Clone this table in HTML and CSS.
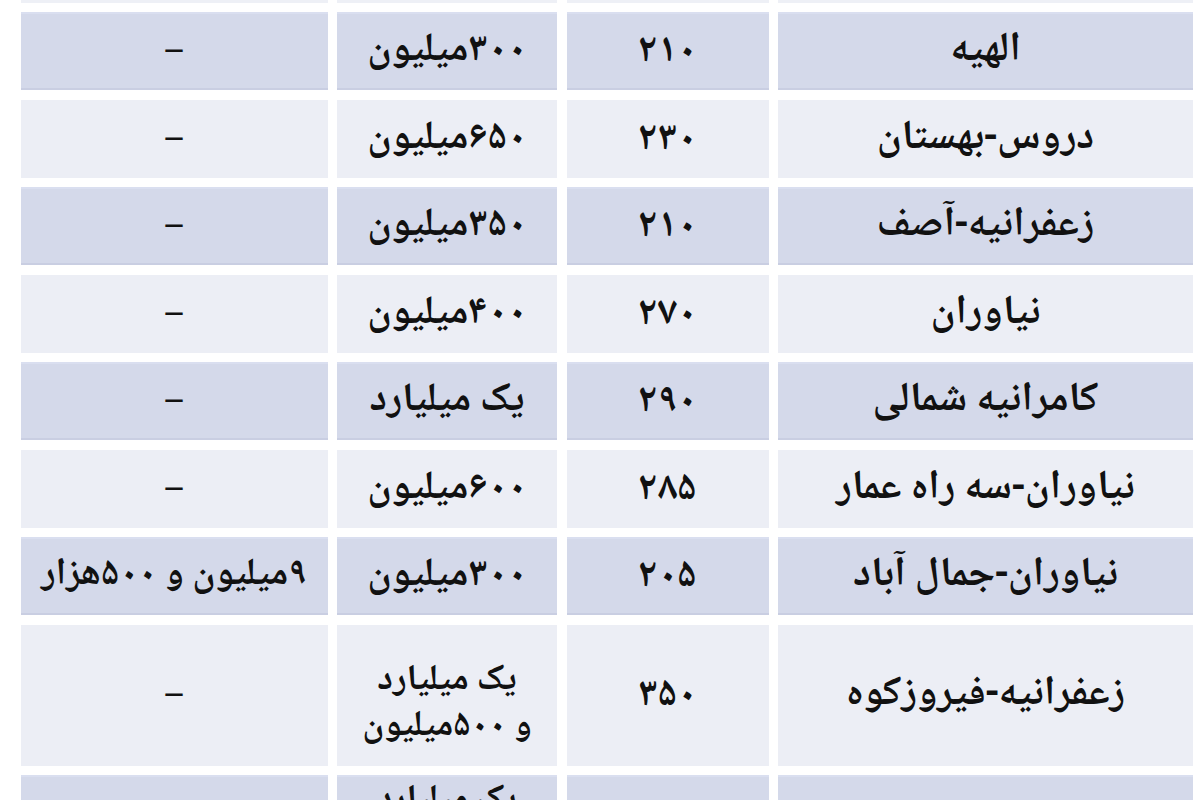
FILE: index.html
```html
<!DOCTYPE html>
<html lang="fa" dir="rtl">
<head>
<meta charset="utf-8">
<title>قیمت</title>
<link rel="stylesheet" href="styles.css">
</head>
<body>
<div class="table">
  <div class="row light cap"><div class="cell"></div><div class="cell"></div><div class="cell"></div><div class="cell"></div></div>
  <div class="row blue"><div class="cell name">الهیه</div><div class="cell num">۲۱۰</div><div class="cell price">۳۰۰میلیون</div><div class="cell dash">–</div></div>
  <div class="row light"><div class="cell name">دروس-بهستان</div><div class="cell num">۲۳۰</div><div class="cell price">۶۵۰میلیون</div><div class="cell dash">–</div></div>
  <div class="row blue"><div class="cell name">زعفرانیه-آصف</div><div class="cell num">۲۱۰</div><div class="cell price">۳۵۰میلیون</div><div class="cell dash">–</div></div>
  <div class="row light"><div class="cell name">نیاوران</div><div class="cell num">۲۷۰</div><div class="cell price">۴۰۰میلیون</div><div class="cell dash">–</div></div>
  <div class="row blue"><div class="cell name">کامرانیه شمالی</div><div class="cell num">۲۹۰</div><div class="cell price">یک میلیارد</div><div class="cell dash">–</div></div>
  <div class="row light"><div class="cell name">نیاوران-سه راه عمار</div><div class="cell num">۲۸۵</div><div class="cell price">۶۰۰میلیون</div><div class="cell dash">–</div></div>
  <div class="row blue"><div class="cell name">نیاوران-جمال آباد</div><div class="cell num">۲۰۵</div><div class="cell price">۳۰۰میلیون</div><div class="cell wide">۹میلیون و ۵۰۰هزار</div></div>
  <div class="row light"><div class="cell name">زعفرانیه-فیروزکوه</div><div class="cell num">۳۵۰</div><div class="cell multi">یک میلیارد<br>و ۵۰۰میلیون</div><div class="cell dash">–</div></div>
  <div class="row blue last"><div class="cell"></div><div class="cell"></div><div class="cell multi">یک میلیارد</div><div class="cell dash"></div></div>
</div>
</body>
</html>
```
FILE: styles.css
```css
html, body {
  margin: 0;
  padding: 0;
  background: #ffffff;
  overflow: hidden;
}

body {
  width: 1200px;
  height: 800px;
  font-family: "Noto Naskh Arabic", "DejaVu Sans", sans-serif;
  font-weight: bold;
  color: #111111;
}

.table {
  display: grid;
  direction: rtl;
  grid-template-columns: 415px 202px 220px 307px;
  grid-template-rows: 2.5px repeat(7, 78px) 141px 141px;
  column-gap: 9.5px;
  row-gap: 9.5px;
  padding: 0 7px 0 21px;
}

.row {
  display: contents;
}

.cell {
  display: flex;
  align-items: center;
  justify-content: center;
  text-align: center;
  font-size: 38px;
  line-height: 44px;
  white-space: nowrap;
  overflow: visible;
}

.blue .cell {
  background: #d4d9ea;
  box-shadow: inset 0 -2px 0 #c9cee2, inset 0 2px 0 #dadff0;
}

.light .cell {
  background: #eceef5;
}

.cap .cell {
  background: #eef0f6;
}

.name {
  font-size: 41px;
}

.price {
  font-size: 40px;
}

.num {
  font-size: 40px;
  padding-top: 2px;
}

.dash {
  font-size: 34px;
  padding-top: 4px;
}

.wide {
  font-size: 38px;
  letter-spacing: -0.5px;
}

.multi {
  font-size: 36px;
  line-height: 46px;
  padding-top: 20px;
}

.last .multi {
  align-items: flex-start;
  padding-top: 4px;
}
```
